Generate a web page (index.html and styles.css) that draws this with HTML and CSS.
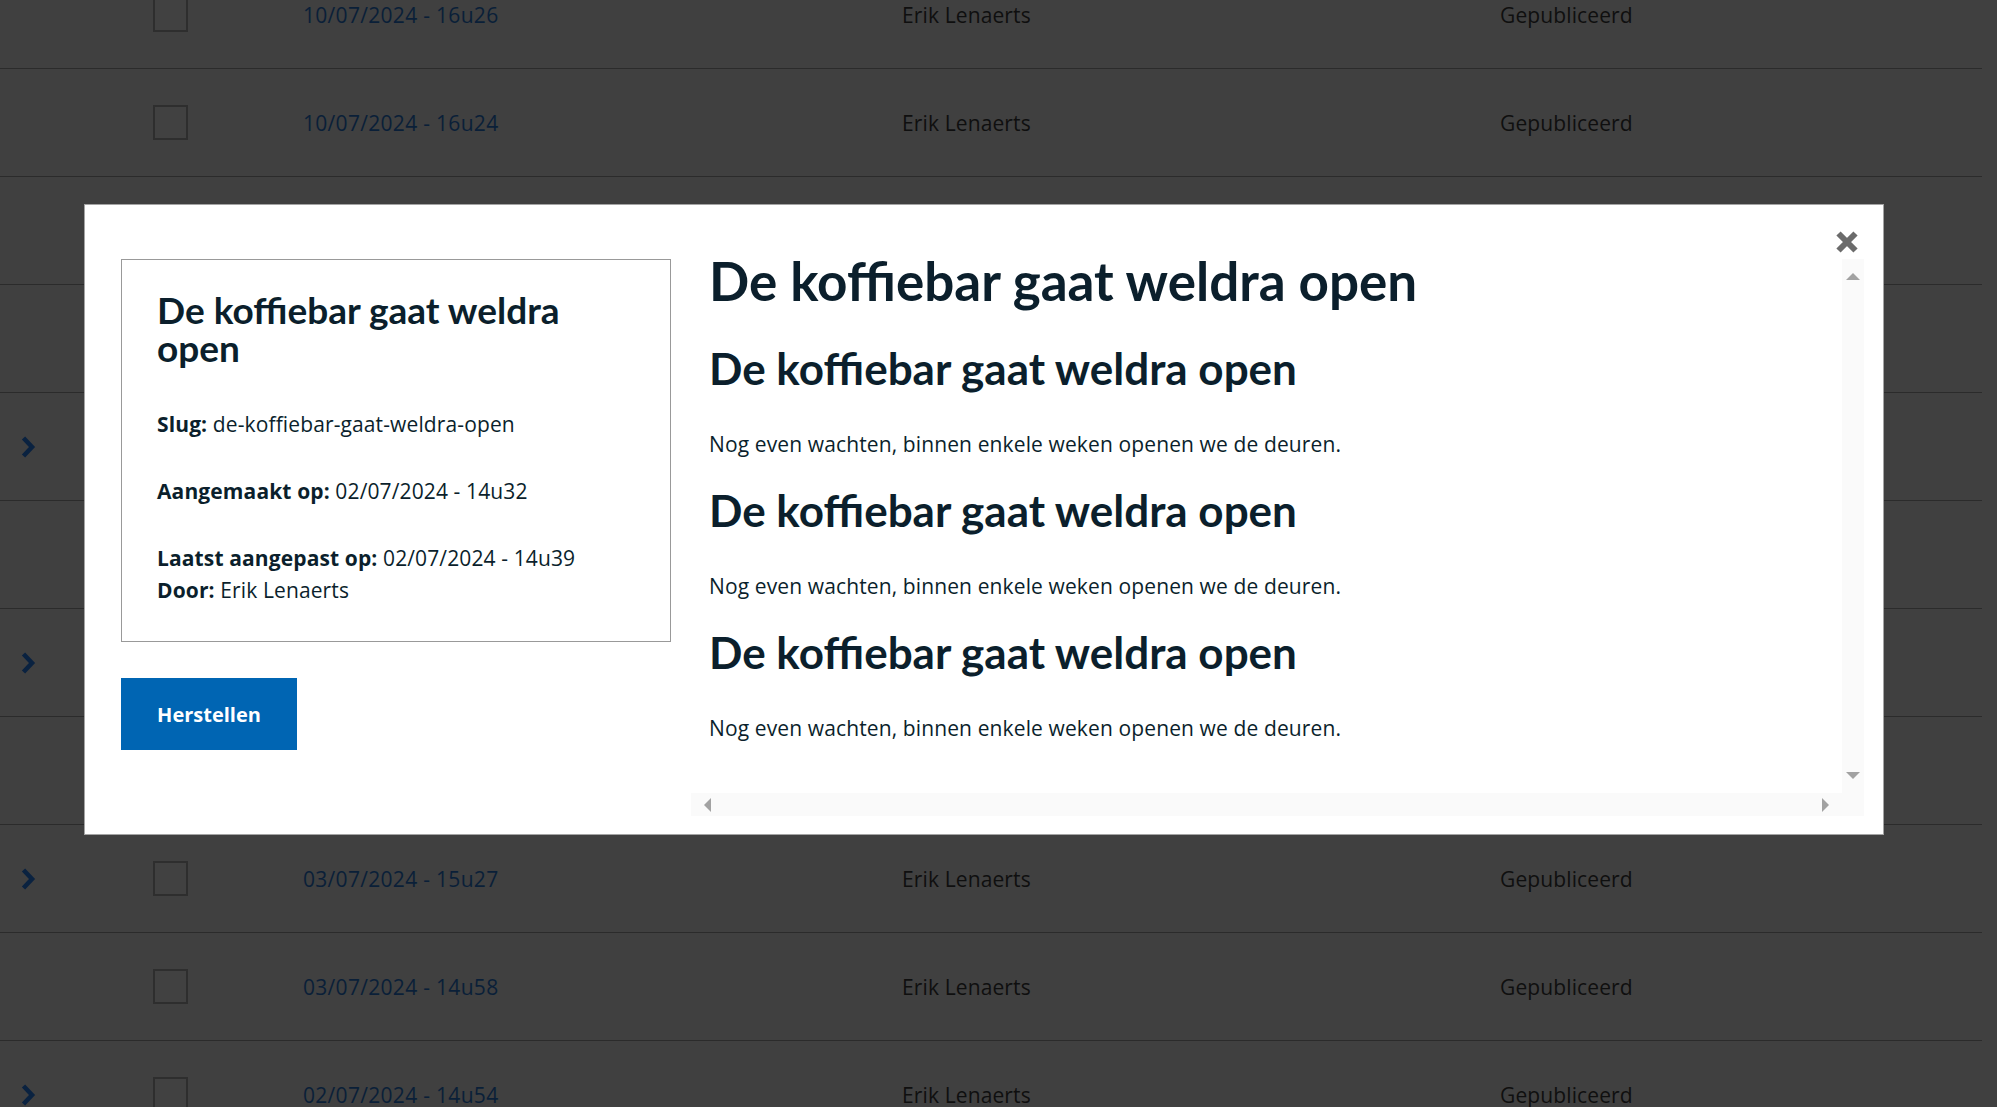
FILE: index.html
```html
<!DOCTYPE html>
<html lang="nl">
<head>
<meta charset="utf-8">
<title>Versies</title>
<link rel="stylesheet" href="styles.css">
</head>
<body>
<main class="list">
  <div class="row"><div class="c-toggle"></div><div class="c-check"><span class="checkbox"></span></div><div class="c-date">10/07/2024 - 16u26</div><div class="c-author">Erik Lenaerts</div><div class="c-status">Gepubliceerd</div></div>
  <div class="row"><div class="c-toggle"></div><div class="c-check"><span class="checkbox"></span></div><div class="c-date">10/07/2024 - 16u24</div><div class="c-author">Erik Lenaerts</div><div class="c-status">Gepubliceerd</div></div>
  <div class="row"><div class="c-toggle"></div><div class="c-check"><span class="checkbox"></span></div><div class="c-date">10/07/2024 - 16u20</div><div class="c-author">Erik Lenaerts</div><div class="c-status">Gepubliceerd</div></div>
  <div class="row"><div class="c-toggle"></div><div class="c-check"><span class="checkbox"></span></div><div class="c-date">09/07/2024 - 11u05</div><div class="c-author">Erik Lenaerts</div><div class="c-status">Gepubliceerd</div></div>
  <div class="row"><div class="c-toggle"><svg class="chev" viewBox="0 0 16 24"><polyline points="3.5,3 12,12 3.5,21"/></svg></div><div class="c-check"><span class="checkbox"></span></div><div class="c-date">08/07/2024 - 09u41</div><div class="c-author">Erik Lenaerts</div><div class="c-status">Gepubliceerd</div></div>
  <div class="row"><div class="c-toggle"></div><div class="c-check"><span class="checkbox"></span></div><div class="c-date">05/07/2024 - 15u12</div><div class="c-author">Erik Lenaerts</div><div class="c-status">Gepubliceerd</div></div>
  <div class="row"><div class="c-toggle"><svg class="chev" viewBox="0 0 16 24"><polyline points="3.5,3 12,12 3.5,21"/></svg></div><div class="c-check"><span class="checkbox"></span></div><div class="c-date">04/07/2024 - 10u33</div><div class="c-author">Erik Lenaerts</div><div class="c-status">Gepubliceerd</div></div>
  <div class="row"><div class="c-toggle"></div><div class="c-check"><span class="checkbox"></span></div><div class="c-date">03/07/2024 - 16u02</div><div class="c-author">Erik Lenaerts</div><div class="c-status">Gepubliceerd</div></div>
  <div class="row"><div class="c-toggle"><svg class="chev" viewBox="0 0 16 24"><polyline points="3.5,3 12,12 3.5,21"/></svg></div><div class="c-check"><span class="checkbox"></span></div><div class="c-date">03/07/2024 - 15u27</div><div class="c-author">Erik Lenaerts</div><div class="c-status">Gepubliceerd</div></div>
  <div class="row"><div class="c-toggle"></div><div class="c-check"><span class="checkbox"></span></div><div class="c-date">03/07/2024 - 14u58</div><div class="c-author">Erik Lenaerts</div><div class="c-status">Gepubliceerd</div></div>
  <div class="row"><div class="c-toggle"><svg class="chev" viewBox="0 0 16 24"><polyline points="3.5,3 12,12 3.5,21"/></svg></div><div class="c-check"><span class="checkbox"></span></div><div class="c-date">02/07/2024 - 14u54</div><div class="c-author">Erik Lenaerts</div><div class="c-status">Gepubliceerd</div></div>
</main>

<div class="backdrop">
  <section class="modal" role="dialog" aria-label="Versie bekijken">
    <button class="close" aria-label="Sluiten">
      <svg viewBox="0 0 26 26"><path d="M4.5 4.5 L21.5 21.5 M21.5 4.5 L4.5 21.5"/></svg>
    </button>
    <div class="side">
      <div class="card">
        <h3 class="card-title">De koffiebar gaat weldra open</h3>
        <p class="meta"><strong>Slug:</strong> de-koffiebar-gaat-weldra-open</p>
        <p class="meta"><strong>Aangemaakt op:</strong> 02/07/2024 - 14u32</p>
        <p class="meta"><strong>Laatst aangepast op:</strong> 02/07/2024 - 14u39<br><strong>Door:</strong> Erik Lenaerts</p>
      </div>
      <button class="btn">Herstellen</button>
    </div>
    <div class="preview">
      <div class="preview-body">
        <h1 class="pv-h1">De koffiebar gaat weldra open</h1>
        <h2 class="pv-h2">De koffiebar gaat weldra open</h2>
        <p class="pv-p">Nog even wachten, binnen enkele weken openen we de deuren.</p>
        <h2 class="pv-h2">De koffiebar gaat weldra open</h2>
        <p class="pv-p">Nog even wachten, binnen enkele weken openen we de deuren.</p>
        <h2 class="pv-h2">De koffiebar gaat weldra open</h2>
        <p class="pv-p">Nog even wachten, binnen enkele weken openen we de deuren.</p>
      </div>
      <div class="vbar"><span class="arr arr-up"></span><span class="arr arr-down"></span></div>
      <div class="hbar"><span class="arr arr-left"></span><span class="arr arr-right"></span></div>
      <div class="corner"></div>
    </div>
  </section>
</div>
</body>
</html>
```

FILE: styles.css
```css
html, body {
  margin: 0;
  padding: 0;
}
body {
  background: #404040;
  overflow: hidden;
  font-family: "Open Sans", "Noto Sans", sans-serif;
  font-size: 21px;
  letter-spacing: 0.12px;
  color: #111;
}

.list {
  width: 1982px;
  margin-top: -39px;
}
.row {
  box-sizing: border-box;
  height: 108px;
  border-bottom: 1px solid #2b2b2b;
  display: grid;
  grid-template-columns: 153px 150px 599px 598px 1fr;
  align-items: center;
}
.c-toggle {
  padding-left: 20px;
  display: flex;
  align-items: center;
}
.chev {
  width: 16px;
  height: 24px;
  fill: none;
  stroke: #0a2240;
  stroke-width: 4.5;
}
.checkbox {
  display: block;
  box-sizing: border-box;
  width: 35px;
  height: 35px;
  border: 2px solid #2e2e2e;
  background: #414141;
}
.c-date {
  color: #0a1f38;
  letter-spacing: 0.3px;
}
.c-author, .c-status {
  color: #0f0f0f;
}

/* modal */
.backdrop {
  position: fixed;
  inset: 0;
  padding: 204px 0 0 84px;
}
.modal {
  position: relative;
  box-sizing: border-box;
  width: 1800px;
  height: 631px;
  background: #fff;
  border: 1px solid #a4a4a4;
  padding: 54px 19px 18px 36px;
  display: grid;
  grid-template-columns: 550px 1fr;
  column-gap: 20px;
  color: #0b1f2c;
}
.close {
  position: absolute;
  top: 24px;
  right: 23px;
  width: 26px;
  height: 26px;
  padding: 0;
  border: 0;
  background: none;
}
.close svg {
  display: block;
  width: 26px;
  height: 26px;
  fill: none;
  stroke: #6b6b6b;
  stroke-width: 6;
}

.side {
  display: flex;
  flex-direction: column;
  align-items: flex-start;
}
.card {
  box-sizing: border-box;
  width: 550px;
  border: 1px solid #999;
  padding: 31px 60px 35px 35px;
}
.card-title {
  margin: 0 0 41px;
  font-family: Lato, "Open Sans", sans-serif;
  font-weight: 700;
  font-size: 37px;
  line-height: 38px;
  letter-spacing: 0;
  color: #0b1f2c;
}
.meta {
  margin: 0 0 35px;
  line-height: 32px;
  color: #0b1f2c;
}
.meta:last-child {
  margin-bottom: 0;
}
.meta strong {
  font-weight: 700;
}
.btn {
  margin-top: 36px;
  width: 176px;
  height: 72px;
  border: 0;
  padding: 0;
  background: #0065b3;
  color: #fff;
  font-family: "Open Sans", "Noto Sans", sans-serif;
  font-weight: 700;
  font-size: 20px;
}

/* preview with scrollbars */
.preview {
  display: grid;
  grid-template-columns: 1fr 22px;
  grid-template-rows: 1fr 23px;
  min-height: 0;
}
.preview-body {
  overflow: hidden;
  padding-left: 18px;
}
.pv-h1 {
  margin: 0 0 40px;
  font-family: Lato, "Open Sans", sans-serif;
  font-weight: 700;
  font-size: 53px;
  line-height: 43px;
  letter-spacing: 0;
}
.pv-h2 {
  margin: 0 0 34px;
  font-family: Lato, "Open Sans", sans-serif;
  font-weight: 700;
  font-size: 44px;
  line-height: 52px;
  letter-spacing: 0;
}
.pv-p {
  margin: 0 0 24px;
  line-height: 32px;
}
.vbar, .hbar, .corner {
  background: #fafafa;
}
.vbar {
  display: flex;
  flex-direction: column;
  justify-content: space-between;
  align-items: center;
  padding: 14px 0;
}
.hbar {
  display: flex;
  justify-content: space-between;
  align-items: center;
  padding: 0 13px;
}
.arr {
  display: block;
  width: 0;
  height: 0;
}
.arr-up {
  border-left: 7.5px solid transparent;
  border-right: 7.5px solid transparent;
  border-bottom: 7px solid #a2a2a2;
}
.arr-down {
  border-left: 7.5px solid transparent;
  border-right: 7.5px solid transparent;
  border-top: 7px solid #a2a2a2;
}
.arr-left {
  border-top: 7.5px solid transparent;
  border-bottom: 7.5px solid transparent;
  border-right: 7px solid #a2a2a2;
}
.arr-right {
  border-top: 7.5px solid transparent;
  border-bottom: 7.5px solid transparent;
  border-left: 7px solid #a2a2a2;
}
```
